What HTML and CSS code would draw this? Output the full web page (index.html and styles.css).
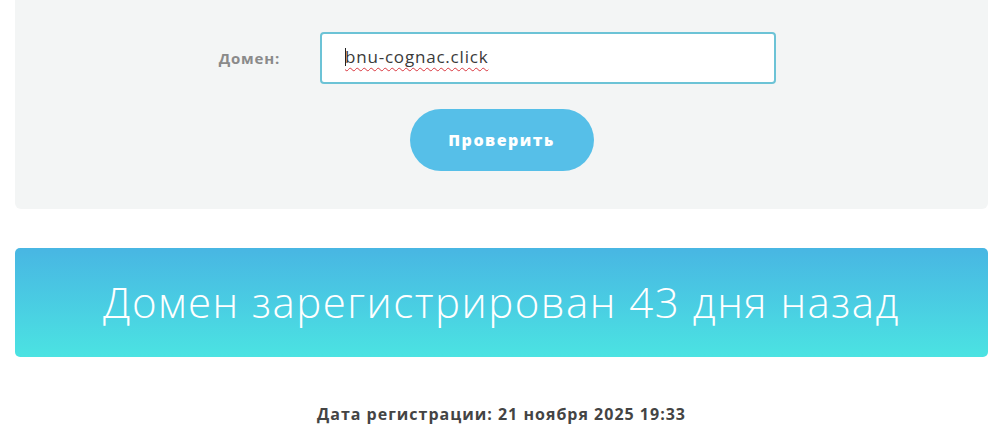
FILE: index.html
```html
<!DOCTYPE html>
<html lang="ru">
<head>
<meta charset="utf-8">
<title>Проверка домена</title>
<link rel="stylesheet" href="styles.css">
</head>
<body>
<div class="page">
  <form class="panel">
    <div class="row">
      <label class="label" for="domain">Домен:</label>
      <div class="input"><span class="caret"></span><span class="typed">bnu-cognac.click</span></div>
    </div>
    <button class="btn" type="button">Проверить</button>
  </form>
  <div class="result">Домен зарегистрирован 43 дня назад</div>
  <p class="date">Дата регистрации: 21 ноября 2025 19:33</p>
</div>
</body>
</html>
```
FILE: styles.css
```css
html, body {
  margin: 0;
  padding: 0;
  background: #ffffff;
}
body {
  font-family: "Open Sans", "Liberation Sans", sans-serif;
  color: #444;
}
.page {
  padding: 0 5px 0 15px;
}
.panel {
  margin: -10px 0 0 0;
  background: #f3f5f5;
  border-radius: 0 0 6px 6px;
  padding: 42px 0 38px 0;
  display: flex;
  flex-direction: column;
  align-items: center;
  gap: 25px;
}
.row {
  align-self: stretch;
  display: flex;
  align-items: center;
  padding-left: 165px;
  gap: 40px;
}
.label {
  width: 100px;
  text-align: right;
  font-weight: 700;
  font-size: 15px;
  color: #8a8a8a;
  letter-spacing: 0.8px;
}
.input {
  box-sizing: border-box;
  width: 456px;
  height: 52px;
  background: #fff;
  border: 2px solid #6cc3d6;
  border-radius: 4px;
  display: flex;
  align-items: center;
  padding-left: 23px;
  padding-bottom: 3px;
  font-size: 17px;
  color: #3a3a3a;
  letter-spacing: 0.8px;
}
.caret {
  width: 1px;
  height: 18px;
  background: #222;
  margin-right: -1px;
}
.typed {
  text-decoration: underline wavy #d9363e;
  text-decoration-thickness: 1px;
  text-underline-offset: 4px;
}
.btn {
  width: 184px;
  height: 62px;
  border: none;
  border-radius: 31px;
  background: #56bfe8;
  color: #fff;
  font-family: "Open Sans", "Liberation Sans", sans-serif;
  font-weight: 800;
  font-size: 16px;
  letter-spacing: 1.5px;
}
.result {
  margin-top: 39px;
  height: 109px;
  border-radius: 5px;
  background: linear-gradient(to bottom, #48b6e3, #4be3e2);
  color: #fff;
  display: flex;
  align-items: center;
  justify-content: center;
  padding-bottom: 3px;
  box-sizing: border-box;
  font-size: 42px;
  font-weight: 300;
  letter-spacing: 1.5px;
}
.date {
  margin: 46px 0 0 0;
  text-align: center;
  font-weight: 700;
  font-size: 16px;
  color: #444;
  letter-spacing: 1px;
}
```
